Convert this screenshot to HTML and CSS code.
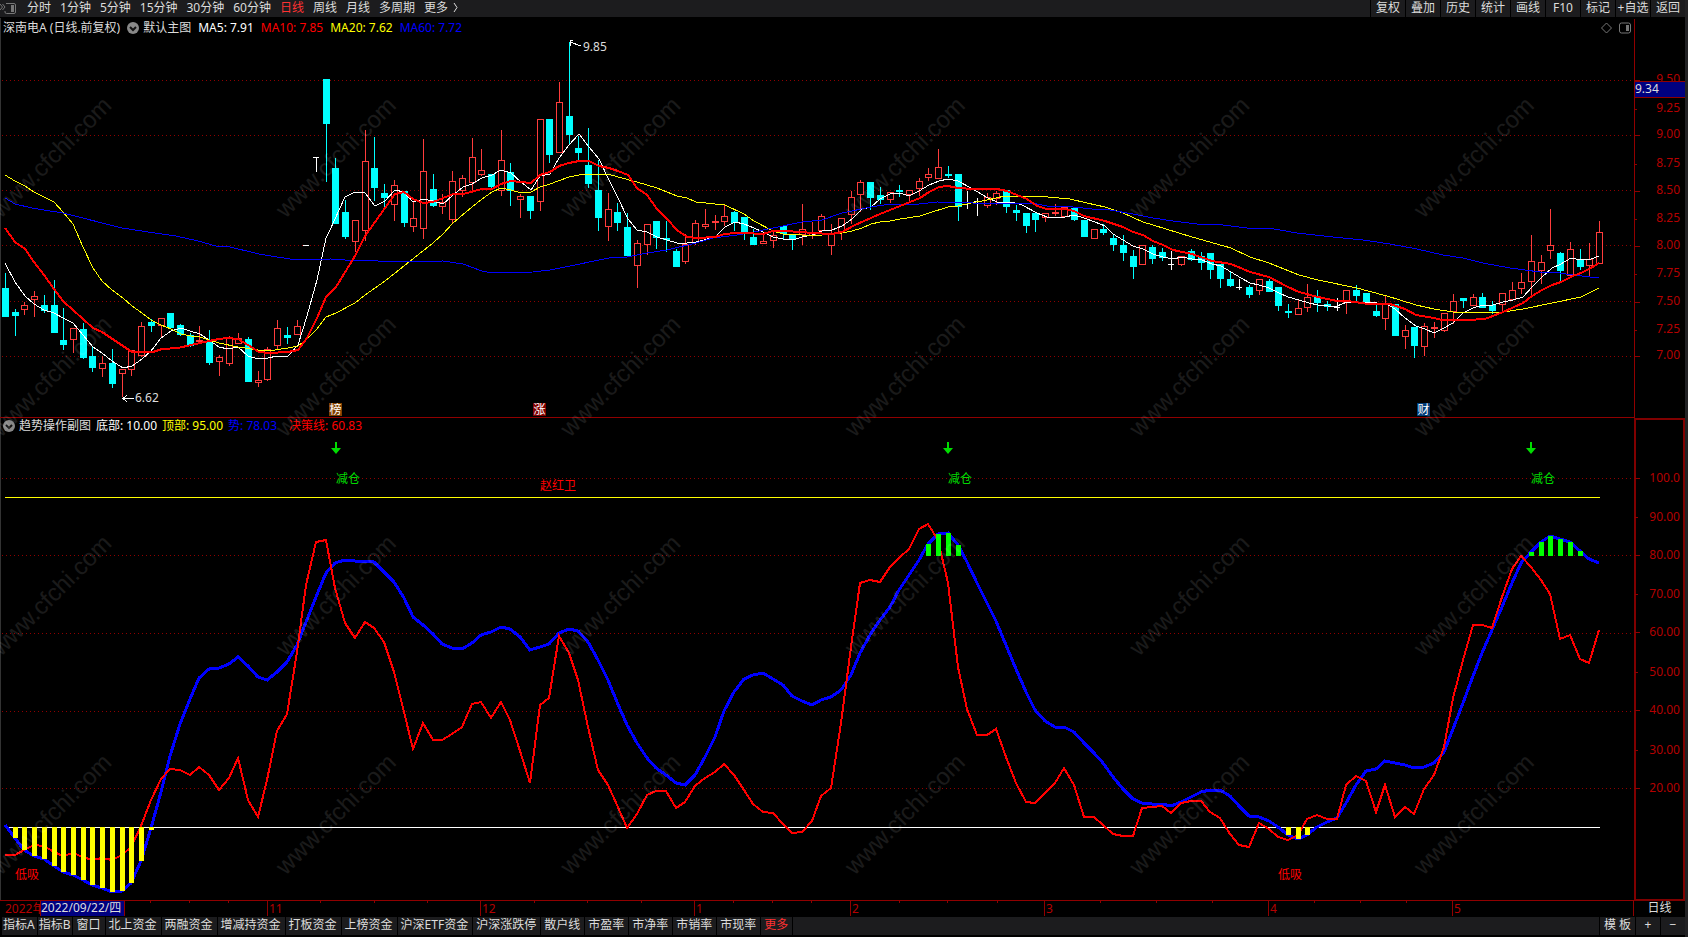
FILE: index.html
```html
<!DOCTYPE html>
<html lang="zh-CN">
<head>
<meta charset="utf-8">
<title>深南电A 日线</title>
<link rel="stylesheet" href="styles.css">
</head>
<body>
<div class="app">
  <nav class="toolbar">
    <button class="toggle" aria-label="侧栏">
      <svg class="toggle-icon" viewBox="0 0 16 14"><path d="M0 3l2.500 3-2.500 3M2.500 3L5 6 2.500 9" /><path d="M6 2.500h8a1.500 1.500 0 0 1 1.500 1.500v7a1.500 1.500 0 0 1-1.500 1.500H6.500a1.500 1.500 0 0 1-1.500-1.500V10"/><rect x="11" y="4" width="3" height="7" class="solid"/></svg>
    </button>
    <div class="periods">
      <button>分时</button><button>1分钟</button><button>5分钟</button><button>15分钟</button><button>30分钟</button><button>60分钟</button><button class="active">日线</button><button>周线</button><button>月线</button><button>多周期</button><button class="more">更多 <svg class="chevron" viewBox="0 0 5 11"><path d="M1 1l3 4.500-3 4.500"/></svg></button>
    </div>
    <div class="tools">
      <button>复权</button><button>叠加</button><button>历史</button><button>统计</button><button>画线</button><button>F10</button><button>标记</button><button>+自选</button><button>返回</button>
    </div>
  </nav>

  <section class="panel">
    <div class="plot">
      <svg class="canvas" id="main" viewBox="0 18 1634 400" preserveAspectRatio="none"></svg>
      <header class="legend">
        <span>深南电A (日线.前复权)</span>
        <span class="title"><svg class="drop" viewBox="0 0 12 12"><circle cx="6" cy="6" r="6"/><path d="M3 5l3 3 3-3"/></svg>默认主图</span>
        <span class="white">MA5: 7.91</span><span class="red">MA10: 7.85</span><span class="yellow">MA20: 7.62</span><span class="blue">MA60: 7.72</span>
        <svg class="corner" viewBox="0 0 30 12"><path d="M5.500 1l5 5-5 5-5-5z"/><rect x="18.500" y="1" width="11" height="10" rx="2"/><rect x="25" y="3" width="3" height="6" class="solid"/></svg>
      </header>
    </div>
    <svg class="axis" id="mainAxis" viewBox="1634 18 51 400" preserveAspectRatio="none"></svg>
  </section>

  <section class="panel">
    <div class="plot">
      <svg class="canvas" id="sub" viewBox="0 418 1634 483" preserveAspectRatio="none"></svg>
      <header class="legend sub-legend">
        <span class="title"><svg class="drop" viewBox="0 0 12 12"><circle cx="6" cy="6" r="6"/><path d="M3 5l3 3 3-3"/></svg>趋势操作副图</span>
        <span class="white">底部: 10.00</span><span class="yellow">顶部: 95.00</span><span class="blue">势: 78.03</span><span class="red wide">决策线: 60.83</span>
      </header>
    </div>
    <svg class="axis" id="subAxis" viewBox="1634 418 51 483" preserveAspectRatio="none"></svg>
  </section>

  <section class="dates">
    <svg class="canvas" id="dates" viewBox="0 901 1634 16" preserveAspectRatio="none"></svg>
    <span class="cycle">日线</span>
  </section>

  <nav class="indicators">
    <button class="tight">指标A</button><button class="tight">指标B</button><button>窗口</button><button>北上资金</button><button>两融资金</button><button>增减持资金</button><button>打板资金</button><button>上榜资金</button><button>沪深ETF资金</button><button>沪深涨跌停</button><button>散户线</button><button>市盈率</button><button>市净率</button><button>市销率</button><button>市现率</button><button class="active">更多</button>
    <span class="filler"></span>
    <button class="template">模 板</button><button class="step">+</button><button class="step">−</button>
  </nav>
  <svg class="watermark" id="mark" viewBox="0 0 1688 937" preserveAspectRatio="none"></svg>
</div>
<script src="chart.js"></script>
</body>
</html>
```

FILE: styles.css
```css
* { box-sizing: border-box; }
body {
  margin: 0;
  background: #000;
  color: #dcdcdc;
  font: 12px/16px "Noto Sans", "Noto Sans CJK SC", sans-serif;
}
button {
  margin: 0;
  padding: 0;
  border: 0;
  background: none;
  color: inherit;
  font: inherit;
  white-space: nowrap;
}
svg { display: block; fill: none; }
.app {
  position: relative;
  display: grid;
  grid-template-rows: 18px minmax(0, 400fr) minmax(0, 483fr) 16px 20px;
  height: 100vh;
  border-right: 3px solid #222224;
  overflow: hidden;
}
.toolbar {
  display: flex;
  height: 17px;
  background: #1c1c1e;
}
.toolbar button { height: 15px; line-height: 14px; }
.toolbar .toggle { width: 16px; }
.toggle-icon { width: 16px; height: 14px; stroke: #777; }
.solid { fill: #777; stroke: none; }
.periods {
  display: flex;
  flex: 1;
  gap: 9px;
  padding-left: 11px;
}
.active { color: #ff3232; }
.more { display: flex; align-items: center; gap: 5px; }
.chevron { width: 5px; height: 11px; stroke: #dcdcdc; }
.tools { display: flex; background: #000; }
.toolbar .tools button {
  width: 34px;
  height: 17px;
  margin-left: 1px;
  padding-bottom: 2px;
  background: #1c1c1e;
  overflow: hidden;
}
.panel {
  display: grid;
  grid-template-columns: minmax(0, 1fr) 51px;
  min-height: 0;
}
.plot {
  position: relative;
  min-height: 0;
  box-shadow: inset 1px 0 #333;
}
.canvas, .axis { width: 100%; height: 100%; min-height: 0; }
.plot .canvas { position: absolute; inset: 0; }
.legend {
  position: absolute;
  inset: 2px 0 auto 0;
  display: flex;
  align-items: center;
  gap: 7px;
  padding-left: 3px;
  white-space: nowrap;
}
.sub-legend { inset: 0 0 auto 0; gap: 5px; }
.title { display: flex; align-items: center; gap: 4px; }
.drop { width: 12px; height: 12px; }
.drop circle { fill: #888; }
.drop path { stroke: #111; stroke-width: 2; }
.corner { width: 30px; height: 12px; margin: 0 3px 0 auto; stroke: #777; }
.white { color: #fff; }
.red { color: #f00; }
.yellow { color: #ff0; }
.blue { color: #00f; }
.wide { margin-left: 7px; }
.dates { display: grid; grid-template-columns: minmax(0, 1fr) 51px; }
.cycle { text-align: center; line-height: 14px; }
.indicators { display: flex; gap: 1px; height: 18px; padding-left: 2px; }
.indicators button { padding: 0 4px 2px 3px; background: #1c1c1e; }
.indicators .tight { padding: 0 2px 2px 1px; }
.filler { flex: 1; background: #1c1c1e; }
.indicators .template { width: 35px; padding: 0 0 2px; }
.indicators .step { width: 24px; padding: 0 0 2px; }
.watermark {
  position: absolute;
  inset: 0;
  width: 100%;
  height: 100%;
  pointer-events: none;
}
.watermark text { font: 24px "Liberation Sans", sans-serif; fill: #fff; opacity: 0.1; }
.crisp { shape-rendering: crispEdges; }
.grid { stroke: #900000; stroke-dasharray: 1 3; }
.frame { stroke: #900000; }
.box { stroke: #800000; stroke-width: 2; }
.up { fill: #000; stroke: #ff3c3c; }
.up-wick { fill: #ff3c3c; }
.down { fill: #0ff; }
.flat { fill: #fff; }
.line-white { stroke: #fff; }
.line-yellow { stroke: #ff0; }
.line-blue { stroke: #00f; }
.line-red { stroke: #f00; stroke-width: 2; }
.line-trend { stroke: #00f; stroke-width: 3; }
.fill-yellow { fill: #ff0; }
.fill-lime { fill: #0f0; }
.fill-green { fill: #00dc00; }
.fill-navy { fill: #000080; }
.fill-brown { fill: #804000; }
.fill-maroon { fill: #800000; }
.fill-steel { fill: #003c78; }
.fill-red { fill: #f00; }
.fill-white { fill: #fff; }
.fill-light { fill: #dcdcdc; }
.fill-axis { fill: #b40000; }
.end { text-anchor: end; }
.pointer { stroke: #fff; }
```

FILE: chart.js
```js
const NS = 'http://www.w3.org/2000/svg';
const $ = id => document.getElementById(id);

function add(parent, tag, attrs, text) {
  const el = document.createElementNS(NS, tag);
  for (const k in attrs) el.setAttribute(k, attrs[k]);
  if (text !== undefined) el.textContent = text;
  parent.appendChild(el);
}
const rect = (p, x, y, width, height, cls) => add(p, 'rect', { x, y, width, height, class: cls + ' crisp' });
const path = (p, d, cls) => add(p, 'path', { d, class: cls + ' crisp' });
const label = (p, x, y, text, cls) => add(p, 'text', { x, y: y + 4, class: cls }, text);
const barX = i => Math.round(5 + 9.72 * i);

/* kind, body top, body bottom, high, low: u rising, d falling, w unchanged */
const candles = `d288 317 273 317,d312 316 309 336,u305 310 302 315,u296 300 291 317,d305 311 295 313,d305 333 280 333,d340 345 308 350,u328 340 328 353,d329 358 323 359,d356 368 346 372,u363 369 356 377,d363 384 349 388,u369 374 369 397,u350 370 350 376,u326 356 322 357,d322 326 319 332,u318 326 318 337,d313 328 313 328,d325 335 324 336,d335 346 333 347,u340 342 326 344,d341 363 330 365,u357 362 355 376,u338 364 336 366,u338 344 333 344,d339 382 337 382,u380 383 371 387,u349 380 347 381,u328 346 320 349,d335 338 327 344,u326 335 320 335,w245 246 245 246,w157 158 157 172,d79 124 79 182,d168 224 158 224,d212 237 200 239,u220 242 220 252,u161 231 130 241,d168 188 137 201,d193 198 184 208,u185 205 180 221,d191 223 191 227,u218 227 202 232,u171 229 139 239,d189 206 174 207,u202 207 194 214,u181 220 171 223,u178 191 175 197,u157 183 138 191,u170 175 149 176,d174 187 174 190,u160 191 130 196,d172 191 163 206,u196 200 194 218,d196 211 196 219,u119 202 119 211,d119 155 119 163,u102 153 82 153,d116 135 42 144,d148 153 136 160,d165 184 128 188,d190 218 160 231,u209 227 193 241,d212 223 203 231,d227 256 213 256,u243 266 240 288,u224 245 224 255,d221 238 221 249,d238 240 221 252,d251 267 249 267,u244 262 234 264,u223 243 220 245,u224 227 209 229,u221 223 215 230,u216 222 204 226,d212 223 211 231,d217 233 217 240,d237 245 229 245,u241 244 234 244,u235 241 232 248,d226 234 226 240,d235 240 235 250,u229 235 204 245,u232 236 222 239,u216 231 214 231,u234 246 224 255,u218 233 218 240,u197 215 191 224,u182 195 180 212,d182 198 182 210,d195 200 187 204,u192 200 192 203,d190 192 185 197,u190 195 190 201,u181 189 178 196,u174 178 168 181,u167 179 149 179,d174 176 166 178,d174 207 174 221,w191 191 191 209,w201 202 198 216,u197 206 193 208,u193 199 191 205,d190 207 190 213,d210 213 205 221,d213 226 213 233,d213 220 213 232,u213 218 213 222,u212 213 204 216,u207 217 207 217,d208 220 208 221,d220 237 220 237,u229 239 229 239,d229 233 224 235,d238 245 235 251,d245 253 235 261,d256 267 250 279,u245 265 245 265,d247 259 245 264,d252 258 248 261,w264 265 251 270,u256 265 256 266,d251 260 249 261,d256 263 252 270,d253 270 253 279,d264 279 264 288,d279 286 272 287,w287 288 279 290,d287 295 285 298,u279 291 279 295,d281 292 279 292,d287 306 287 311,d311 312 304 318,u308 315 300 315,u297 308 284 312,d296 303 290 312,d304 307 301 311,w307 308 298 311,u290 303 290 314,d290 296 285 301,d293 302 293 302,d311 316 305 317,u304 319 295 330,d304 336 304 336,u330 337 325 349,d327 346 327 358,u326 347 323 356,u327 329 322 338,u313 331 313 332,u301 312 294 324,d298 301 298 308,u297 306 294 306,d297 308 293 308,d305 311 301 314,u293 305 293 311,u290 300 282 300,u282 289 273 294,u261 282 235 296,u262 271 255 284,u245 251 209 259,d253 271 252 281,u249 276 242 276,d260 267 249 270,u259 266 243 277,u232 264 221 264`.split(',');

const ma5 = '5,263 15,282 25,296 34,304 44,310 54,313 63,318 73,323 83,335 93,347 102,353 112,361 123,368 132,366 142,359 151,351 161,338 171,331 181,328 190,331 200,334 209,340 219,347 228,349 238,347 248,356 258,359 268,358 277,356 288,356 298,345 307,316 317,280 326,238 330,230 345,197 355,192 365,193 375,206 385,201 395,190 404,192 413,202 423,199 433,201 443,204 453,195 463,187 472,184 482,178 492,175 501,170 511,173 521,182 531,190 540,176 550,174 559,158 569,145 579,134 589,147 599,159 609,180 618,198 628,219 637,230 647,232 657,237 667,240 677,243 687,243 696,242 715,237 725,227 735,222 744,224 754,228 763,232 773,237 783,239 793,240 802,237 812,235 822,231 832,230 842,226 852,219 862,209 871,207 880,199 890,194 900,193 909,196 919,191 929,185 939,181 948,179 958,181 971,188 988,198 997,202 1012,202 1022,205 1037,213 1047,217 1065,217 1074,215 1084,218 1095,222 1105,226 1113,234 1123,240 1133,246 1143,249 1153,254 1163,257 1173,259 1182,257 1192,259 1202,260 1212,264 1221,266 1231,272 1241,278 1250,283 1259,285 1269,288 1279,293 1288,297 1299,300 1309,303 1318,305 1328,306 1337,306 1347,302 1368,302 1377,303 1385,303 1395,309 1405,318 1416,326 1425,329 1434,333 1444,328 1453,323 1463,313 1473,308 1483,305 1493,305 1503,302 1513,300 1523,297 1532,287 1542,277 1552,268 1561,264 1571,258 1581,260 1591,259 1599,256';
const ma10 = '5,228 15,242 25,249 34,262 44,275 54,289 63,301 73,310 83,319 93,328 102,332 123,346 132,352 144,352 153,352 162,349 178,348 191,345 209,341 219,339 228,338 238,339 248,345 259,352 268,353 288,352 298,350 307,338 317,318 326,297 336,287 355,256 365,236 375,222 385,208 395,194 404,192 413,199 423,203 433,202 443,198 453,194 463,194 482,189 492,189 501,184 511,181 521,182 531,183 540,175 550,172 559,166 569,163 579,161 589,161 599,166 609,168 618,171 628,175 637,188 647,195 657,209 667,219 677,230 687,237 697,238 715,237 725,234 735,233 744,233 763,234 773,231 783,231 802,232 812,233 832,234 842,232 855,225 880,214 900,206 920,198 929,192 939,187 948,186 958,188 973,189 997,189 1007,191 1017,195 1027,199 1037,206 1047,209 1065,209 1074,211 1084,216 1105,221 1123,227 1133,232 1143,235 1153,241 1163,245 1173,250 1192,254 1212,261 1231,264 1250,272 1269,277 1288,287 1299,292 1318,297 1337,301 1348,301 1368,304 1390,304 1405,309 1416,315 1434,318 1442,320 1468,320 1485,319 1503,312 1523,303 1532,296 1542,290 1552,285 1561,282 1573,276 1581,273 1591,268 1599,263';
const ma20 = '5,175 15,181 25,186 34,192 44,197 54,202 63,212 73,224 83,247 93,268 102,281 112,290 123,298 132,306 142,313 151,320 161,325 171,329 181,334 191,336 200,337 209,340 219,343 238,347 258,350 268,351 288,348 298,346 307,339 317,329 326,317 336,313 355,303 365,295 385,281 414,258 433,243 443,234 453,223 472,207 482,199 492,192 501,188 511,190 521,193 531,192 540,187 550,184 569,177 579,175 608,174 618,177 637,182 657,188 677,196 687,198 696,202 725,205 744,214 754,221 773,231 783,234 802,235 812,236 822,235 842,233 852,231 862,228 871,224 880,222 890,221 900,219 920,216 929,213 948,207 958,206 971,203 987,200 1005,196 1037,196 1070,199 1087,203 1105,207 1123,213 1143,222 1153,225 1192,237 1231,248 1250,257 1269,263 1299,275 1318,280 1357,288 1368,291 1387,296 1416,305 1434,309 1453,312 1503,312 1523,309 1552,303 1581,297 1599,288';
const ma60 = '5,198 15,204 32,208 44,210 63,213 122,228 155,233 176,236 198,241 216,246 230,247 259,254 277,257 297,260 331,259 345,260 378,261 406,262 443,261 463,264 482,271 492,273 533,272 550,270 580,264 589,262 609,258 627,257 647,253 667,250 696,243 713,238 737,235 754,232 773,228 802,222 822,220 842,213 871,207 890,204 910,205 937,202 973,203 1007,203 1037,204 1047,206 1073,207 1092,209 1110,210 1133,214 1153,218 1173,221 1197,224 1223,225 1247,228 1267,228 1280,230 1297,233 1333,237 1363,240 1390,244 1417,249 1443,255 1463,258 1483,263 1510,268 1540,272 1553,272 1573,275 1590,277 1599,277';

/* one level per bar */
const decision = [855,855,850,845,846,852,856,853,857,860,858,860,855,847,826,800,779,769,770,775,767,775,790,778,758,800,817,780,731,714,652,585,542,540,588,623,638,622,628,642,672,712,749,723,740,740,734,727,704,702,718,702,720,751,783,705,698,636,653,680,727,770,785,805,828,814,795,791,791,808,802,786,778,772,764,775,790,804,812,813,824,833,832,821,796,788,723,647,583,580,582,567,558,549,529,524,540,583,667,709,735,735,729,757,783,802,803,793,783,768,785,817,817,825,834,836,836,808,807,806,813,803,801,801,812,818,834,845,847,823,829,837,840,835,819,815,819,819,785,776,781,812,785,817,807,814,789,775,747,698,660,625,625,628,597,569,556,567,580,594,639,635,659,663,630];
const trend = [825,838,850,856,859,866,872,875,880,885,888,892,891,883,861,828,792,756,724,699,678,669,668,664,657,666,677,680,672,662,645,622,597,573,563,560,561,561,562,572,582,598,617,625,634,644,648,649,643,635,632,627,629,637,650,647,644,633,629,631,642,660,680,702,725,743,758,768,775,783,785,775,757,737,711,692,679,675,673,679,685,696,701,705,700,697,690,675,653,635,620,607,590,575,560,544,534,533,545,562,583,603,621,645,669,692,710,721,727,727,732,743,753,763,777,789,799,803,804,804,806,802,797,792,790,790,796,806,816,817,821,827,835,839,835,827,822,818,803,785,771,769,761,763,765,768,767,763,752,729,703,676,653,630,607,583,563,552,542,536,539,542,551,559,563];

function drawMain() {
  const s = $('main');
  [80, 135, 190, 245, 301, 356].forEach(y => path(s, `M2 ${y + 0.5}H1631`, 'grid'));
  candles.forEach((c, i) => {
    const [top, bottom, high, low] = c.slice(1).split(' ').map(Number);
    const x = barX(i);
    if (c[0] === 'd') {
      rect(s, x - 3, top, 7, Math.max(bottom - top, 2), 'down');
      rect(s, x, high, 1, low - high, 'down');
    } else if (c[0] === 'u') {
      if (top > high) rect(s, x, high, 1, top - high, 'up-wick');
      if (low > bottom) rect(s, x, bottom, 1, low - bottom, 'up-wick');
      rect(s, x - 2.5, top + 0.5, 6, Math.max(bottom - top - 1, 1), 'up');
    } else {
      if (bottom > top) rect(s, x - 3, top, 6, 1, 'flat');
      rect(s, x, high, 1, low - high, 'flat');
    }
  });
  [[ma5, 'line-white'], [ma20, 'line-yellow'], [ma60, 'line-blue'], [ma10, 'line-red']].forEach(([points, cls]) =>
    add(s, 'polyline', { points, class: cls + ' crisp' }));
  path(s, 'M581 46L570 42M570 46V40.500H573', 'pointer');
  label(s, 583, 47, '9.85', 'fill-light');
  path(s, 'M134 398.500H123M127 395L123 398.500L127 402', 'pointer');
  label(s, 135, 398, '6.62', 'fill-light');
  [[329, '榜', 'brown'], [533, '涨', 'maroon'], [1417, '财', 'steel']].forEach(([x, t, c]) => {
    rect(s, x, 403, 13, 13, 'fill-' + c);
    label(s, x + 0.5, 410, t, 'fill-white');
  });
  path(s, 'M0 417.500H1634', 'frame');
}

function drawSub() {
  const s = $('sub');
  [478, 555, 633, 711, 788].forEach(y => path(s, `M2 ${y + 0.5}H1631`, 'grid'));
  path(s, 'M5 497.500H1600', 'line-yellow');
  path(s, 'M9 827.500H1600', 'line-white');
  const pts = a => a.map((y, i) => barX(i) + ',' + y).join(' ');
  add(s, 'polyline', { points: pts(trend), class: 'line-trend crisp' });
  add(s, 'polyline', { points: pts(decision), class: 'line-red crisp' });
  trend.forEach((y, i) => {
    const x = barX(i) - 2;
    if (y > 827) rect(s, x, 827, 5, Math.max(y - 827, 3), 'fill-yellow');
    if (y < 554) rect(s, x, y, 5, 556 - y, 'fill-lime');
  });
  [336, 948, 1531].forEach(x => {
    add(s, 'path', { d: `M${x - 1} 442h2v6h4l-5 6-5-6h4z`, class: 'fill-green' });
    label(s, x, 479, '减仓', 'fill-green');
  });
  label(s, 540, 486, '赵红卫', 'fill-red');
  label(s, 15, 875, '低吸', 'fill-red');
  label(s, 1278, 875, '低吸', 'fill-red');
  path(s, 'M0 900.500H1634', 'frame');
}

function drawAxes() {
  const a = $('mainAxis');
  path(a, 'M1634.500 19V418', 'frame');
  [79, 108, 134, 163, 190, 218, 245, 273, 301, 329, 355].forEach((y, i) => {
    path(a, `M1635 ${y + 1.5}h${i % 2 ? 2 : 5}`, 'frame');
    label(a, 1680, y, (9.5 - i * 0.25).toFixed(2), 'fill-axis end');
  });
  rect(a, 1635, 81, 50, 17, 'fill-navy');
  path(a, 'M1635 81.500h50M1635 97.500h50', 'frame');
  label(a, 1635, 89, '9.34', 'fill-light');
  const b = $('subAxis');
  path(b, 'M1635 419H1684V900H1635z', 'box');
  [478, 517, 555, 594, 632, 672, 710, 750, 788].forEach((y, i) => {
    path(b, `M1635 ${y + 0.5}h${i % 2 ? 3 : 5}`, 'frame');
    label(b, 1680, y, i ? (100 - i * 10).toFixed(2) : '100.0', 'fill-axis end');
  });
}

function drawDates() {
  const s = $('dates');
  [150, 189, 228, 320, 374, 427, 534, 587, 641, 733, 772, 811, 899, 947, 997, 1100, 1156, 1212, 1314, 1360, 1406].forEach(x =>
    path(s, `M${x + 0.5} 901v2`, 'frame'));
  label(s, 5, 909, '2022年', 'fill-axis');
  [[267, 11], [480, 12], [694, 1], [850, 2], [1044, 3], [1268, 4], [1452, 5]].forEach(([x, m]) => {
    path(s, `M${x + 0.5} 901v15`, 'frame');
    label(s, x + 2, 909, m, 'fill-axis');
  });
  rect(s, 40, 901, 85, 15, 'fill-navy');
  path(s, 'M40.500 901v15M124.500 901v15M1633.500 901v15', 'frame');
  label(s, 41, 908, '2022/09/22/四', 'fill-light');
}

function drawWatermark() {
  const s = $('mark');
  for (let row = 0; row < 4; row++)
    for (let col = 0; col < 6; col++)
      add(s, 'text', { transform: `translate(${1 + 285 * col} ${219 + 219 * row}) rotate(-45)` }, 'www.cfchi.com');
}

drawMain();
drawSub();
drawAxes();
drawDates();
drawWatermark();
```
